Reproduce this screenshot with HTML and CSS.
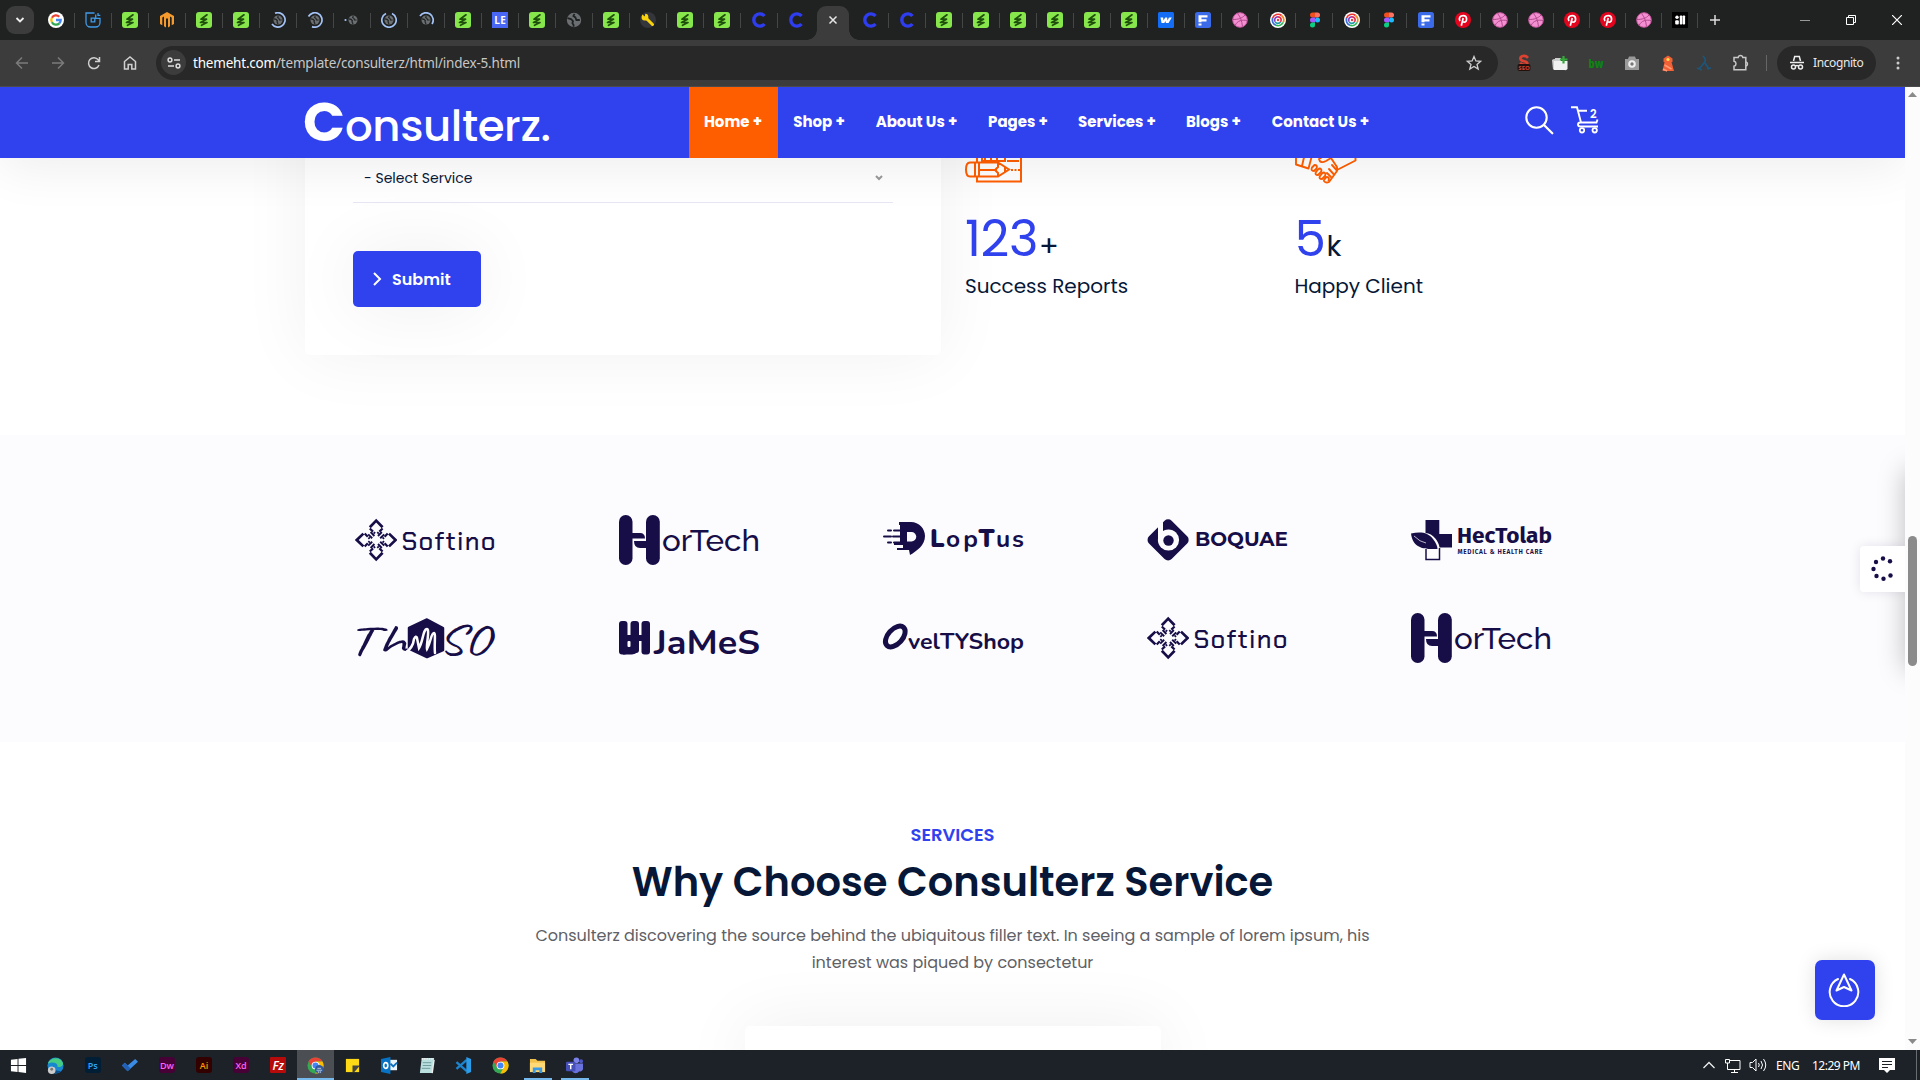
FILE: index.html
```html
<!DOCTYPE html>
<html lang="en">
<head>
<meta charset="utf-8">
<title>Consulterz</title>
<link rel="stylesheet" href="styles.css">
</head>
<body>
<svg class="defs" aria-hidden="true">
  <symbol id="google" viewBox="0 0 16 16"><circle cx="8" cy="8" r="8" fill="#fff"/><g fill="none" stroke-width="2.3"><path d="M11.3 4.8A4.7 4.7 0 0 0 3.9 5.8" stroke="#ea4335"/><path d="M3.9 5.8a4.7 4.7 0 0 0 0 4.5" stroke="#fbbc05"/><path d="M3.9 10.2a4.7 4.7 0 0 0 7.4 1.2" stroke="#34a853"/><path d="M11.3 11.4A4.7 4.7 0 0 0 12.7 8H8" stroke="#4285f4"/></g></symbol>
  <symbol id="bluebox" viewBox="0 0 16 16"><path d="M9.500 1H1v9.500A4.500 4.500 0 0 0 5.500 15h5a4.500 4.500 0 0 0 4.500-4.500V6.300h-4.300V2.500M13 1v2.300h2.300M6.200 6.200h3.600v3.600H6.200z" fill="none" stroke="#3f9ae8" stroke-width="1.300"/></symbol>
  <symbol id="green" viewBox="0 0 16 16"><rect width="16" height="16" rx="3" fill="#87e64b"/><path d="M11 2.800 5 7.200h5.500L4.500 10.500h6.500L5.500 13.300" fill="none" stroke="#1f4f0c" stroke-width="1.700" stroke-linejoin="round" stroke-linecap="round"/></symbol>
  <symbol id="magento" viewBox="0 0 16 16"><path d="M8 0 15 4v8l-2.300 1.300V5.400L11 4.400v9.800l-2 1.300V6.400h-2v9.100l-2-1.300V4.400L3.300 5.400v7.900L1 12V4z" fill="#f79a2e"/></symbol>
  <symbol id="globe" viewBox="0 0 16 16"><circle cx="8" cy="8" r="7.200" fill="#6b6f72"/><path d="M1.500 6.200 5 7l2 2.200-.6 2 1.200 1.800v1.700M8.500 1.800 7.400 4l2 1.400 1 2.600h3.400" fill="none" stroke="#202221" stroke-width="1.800"/></symbol>
  <symbol id="spin1" viewBox="0 0 16 16"><use href="#globe" x="3" y="3" width="10" height="10"/><path d="M5 1.300A7.200 7.200 0 1 1 2 12" fill="none" stroke="#a4c3f7" stroke-width="1.700"/></symbol>
  <symbol id="spin2" viewBox="0 0 16 16"><use href="#globe" x="3" y="3" width="10" height="10"/><path d="M1.500 4.500A7.200 7.200 0 1 1 5 14.600" fill="none" stroke="#a4c3f7" stroke-width="1.700"/></symbol>
  <symbol id="spin3" viewBox="0 0 16 16"><use href="#globe" x="4" y="3" width="10" height="10"/><circle cx="1.500" cy="8" r="1.100" fill="#a4c3f7"/></symbol>
  <symbol id="spin4" viewBox="0 0 16 16"><use href="#globe" x="3" y="3" width="10" height="10"/><path d="M11 1.500A7.200 7.200 0 1 1 5 1.500" fill="none" stroke="#a4c3f7" stroke-width="1.700"/></symbol>
  <symbol id="spin5" viewBox="0 0 16 16"><use href="#globe" x="3" y="3" width="10" height="10"/><path d="M2 4A7.200 7.200 0 0 1 14 12" fill="none" stroke="#a4c3f7" stroke-width="1.700"/></symbol>
  <symbol id="wrench" viewBox="0 0 16 16"><circle cx="8" cy="8" r="8" fill="#34363b"/><path d="m6.500 6.500 6 6" stroke="#fbd30c" stroke-width="3" stroke-linecap="round"/><path d="M2.200 2.500 5 4.500 5.200 1.800a3.400 3.400 0 1 1-3.600 3z" fill="#fbd30c"/></symbol>
  <symbol id="cee" viewBox="0 0 16 16"><path d="M13.500 4A6.100 6.100 0 1 0 13.500 12" fill="none" stroke="#2e3df0" stroke-width="3.400"/></symbol>
  <symbol id="webflow" viewBox="0 0 16 16"><rect width="16" height="16" rx="1.500" fill="#146ef5"/><path d="M2.500 5.500h2.600l.5 3 1.600-3h1.900l.4 3 1.500-3h2.800L10.500 11H7.900l-.4-2-1.200 2H3.600z" fill="#fff"/></symbol>
  <symbol id="eff" viewBox="0 0 16 16"><rect width="16" height="16" rx="2.500" fill="#3b6be8"/><path d="M3.500 3.300h9v2.300h-6v1.700h5v2.200h-5v.7h-3zM3.500 11.500h3v1.900h-3z" fill="#fff"/></symbol>
  <symbol id="dribbble" viewBox="0 0 16 16"><circle cx="8" cy="8" r="7.300" fill="#f48fd1" stroke="#c2559c" stroke-width="1"/><path d="M5.500 1.500c3 3.500 4.200 7 5 13M1 7.500c5 0 9-1 12-4.500M3 13.500c2.500-5 7-6 12-5" fill="none" stroke="#b34a8e"/></symbol>
  <symbol id="rings" viewBox="0 0 16 16"><circle cx="8" cy="8" r="8" fill="#fff"/><g fill="none" stroke-width="1.700"><path d="M2.600 6A5.700 5.700 0 0 1 11.500 3.500" stroke="#f0322f"/><path d="M11.500 3.500A5.700 5.700 0 0 1 13 10.700" stroke="#f08b22"/><path d="M13 10.700A5.700 5.700 0 0 1 6 13.300" stroke="#2cb552"/><path d="M6 13.300A5.700 5.700 0 0 1 2.600 6" stroke="#3a6fe0"/><path d="M5 9.500A3.200 3.200 0 0 1 8 4.800" stroke="#8d3fc4"/><path d="M8 4.800A3.200 3.200 0 0 1 10.500 10" stroke="#e0284e"/><path d="M10.500 10A3.200 3.200 0 0 1 5 9.500" stroke="#1e9aa8"/></g><circle cx="8" cy="8" r="1.200" fill="#e23e3d"/></symbol>
  <symbol id="figma" viewBox="0 0 16 16"><path d="M8 .5H5.500a2.500 2.500 0 0 0 0 5H8z" fill="#f24e1e"/><path d="M8 .5h2.500a2.500 2.500 0 0 1 0 5H8z" fill="#ff7262"/><path d="M8 5.500H5.500a2.500 2.500 0 0 0 0 5H8z" fill="#a259ff"/><circle cx="10.500" cy="8" r="2.500" fill="#1abcfe"/><path d="M8 10.500H5.500A2.500 2.500 0 1 0 8 13z" fill="#0acf83"/></symbol>
  <symbol id="pin" viewBox="0 0 16 16"><circle cx="8" cy="8" r="8" fill="#e3041e"/><path d="M6.300 13.700 8.200 6M5 9C3.300 6 5 3.600 8.300 3.600c4.300 0 4.200 6.600.8 6.600-1 0-1.700-.6-1.900-1.200" fill="none" stroke="#fff" stroke-width="1.700"/></symbol>
  <symbol id="bold" viewBox="0 0 16 16"><rect width="16" height="16" fill="#000"/><circle cx="5" cy="5.200" r="1.700" fill="#fff"/><rect x="3.200" y="8.200" width="3.600" height="4.300" rx="1" fill="#fff"/><rect x="7.800" y="3.500" width="2.500" height="9" rx=".8" fill="#fff"/><rect x="10.600" y="3.500" width="2.500" height="9" rx=".8" fill="#fff"/></symbol>
  <symbol id="chrome" viewBox="0 0 18 18"><circle cx="9" cy="9" r="8.500" fill="#34a853"/><path d="M1.600 4.800A8.500 8.500 0 0 1 16.400 4.800H9L5.400 11z" fill="#ea4335"/><path d="M16.400 4.800A8.500 8.500 0 0 1 8.700 17.500L12.600 11 9 4.800z" fill="#fbbc05"/><circle cx="9" cy="9" r="4.100" fill="#fff"/><circle cx="9" cy="9" r="3.200" fill="#4285f4"/></symbol>
  <symbol id="softino-mark" viewBox="0 0 42 50"><g fill="none" stroke="#170e48"><g id="petal"><path d="M14.800 12.200 21.200 5.600l6.400 6.600" stroke-width="2.700"/><path d="m14.800 13.500 5.200 5M27.600 13.500l-5.200 5" stroke-width="2.200" stroke-dasharray="4.500 1"/><path d="m15.600 17 3.800 4M26.800 17 23 21" stroke-width="1.900"/></g><use href="#petal" transform="rotate(90 21.200 25)"/><use href="#petal" transform="rotate(180 21.200 25)"/><use href="#petal" transform="rotate(270 21.200 25)"/></g></symbol>
  <symbol id="hortech-mark" viewBox="0 0 42 50"><g fill="#170e48"><rect x="0" y="0" width="13.500" height="50" rx="6.700"/><rect x="27" y="0" width="13.800" height="50" rx="6.800"/><path d="M12 18h9q5 0 5 5.500H12zM15 26h13v7h-7q-6 0-6-7z"/></g></symbol>
</svg>

<div class="tabstrip">
  <div class="tab-search"><svg width="10" height="6"><path d="m1.500 1 3.500 3.500L8.500 1" fill="none" stroke="#eee" stroke-width="1.800"/></svg></div>
  <div class="tabs">
    <div class="tab"><svg><use href="#google"/></svg></div>
    <div class="tab"><svg><use href="#bluebox"/></svg></div>
    <div class="tab"><svg><use href="#green"/></svg></div>
    <div class="tab"><svg><use href="#magento"/></svg></div>
    <div class="tab"><svg><use href="#green"/></svg></div>
    <div class="tab"><svg><use href="#green"/></svg></div>
    <div class="tab"><svg><use href="#spin1"/></svg></div>
    <div class="tab"><svg><use href="#spin2"/></svg></div>
    <div class="tab"><svg><use href="#spin3"/></svg></div>
    <div class="tab"><svg><use href="#spin4"/></svg></div>
    <div class="tab"><svg><use href="#spin5"/></svg></div>
    <div class="tab"><svg><use href="#green"/></svg></div>
    <div class="tab"><span class="le">LE</span></div>
    <div class="tab"><svg><use href="#green"/></svg></div>
    <div class="tab"><svg><use href="#globe"/></svg></div>
    <div class="tab"><svg><use href="#green"/></svg></div>
    <div class="tab"><svg><use href="#wrench"/></svg></div>
    <div class="tab"><svg><use href="#green"/></svg></div>
    <div class="tab"><svg><use href="#green"/></svg></div>
    <div class="tab"><svg><use href="#cee"/></svg></div>
    <div class="tab quiet"><svg><use href="#cee"/></svg></div>
    <div class="tab active"><svg viewBox="0 0 16 16"><path d="m4.500 4.500 7 7m0-7-7 7" stroke="#e6e6e6" stroke-width="1.500"/></svg></div>
    <div class="tab"><svg><use href="#cee"/></svg></div>
    <div class="tab"><svg><use href="#cee"/></svg></div>
    <div class="tab"><svg><use href="#green"/></svg></div>
    <div class="tab"><svg><use href="#green"/></svg></div>
    <div class="tab"><svg><use href="#green"/></svg></div>
    <div class="tab"><svg><use href="#green"/></svg></div>
    <div class="tab"><svg><use href="#green"/></svg></div>
    <div class="tab"><svg><use href="#green"/></svg></div>
    <div class="tab"><svg><use href="#webflow"/></svg></div>
    <div class="tab"><svg><use href="#eff"/></svg></div>
    <div class="tab"><svg><use href="#dribbble"/></svg></div>
    <div class="tab"><svg><use href="#rings"/></svg></div>
    <div class="tab"><svg><use href="#figma"/></svg></div>
    <div class="tab"><svg><use href="#rings"/></svg></div>
    <div class="tab"><svg><use href="#figma"/></svg></div>
    <div class="tab"><svg><use href="#eff"/></svg></div>
    <div class="tab"><svg><use href="#pin"/></svg></div>
    <div class="tab"><svg><use href="#dribbble"/></svg></div>
    <div class="tab narrow"><svg><use href="#dribbble"/></svg></div>
    <div class="tab narrow"><svg><use href="#pin"/></svg></div>
    <div class="tab narrow"><svg><use href="#pin"/></svg></div>
    <div class="tab narrow"><svg><use href="#dribbble"/></svg></div>
    <div class="tab narrow"><svg><use href="#bold"/></svg></div>
  </div>
  <div class="new-tab"><svg width="12" height="12"><path d="M6 1v10M1 6h10" stroke="#ddd" stroke-width="1.500"/></svg></div>
  <div class="window-controls">
    <svg viewBox="0 0 10 10"><path d="M0 5.500h10" stroke="#999"/></svg>
    <svg viewBox="0 0 10 10"><path d="M.5 2.500h7v7h-7zM2.500 2.500v-2h7v7h-2" fill="none" stroke="#fff"/></svg>
    <svg viewBox="0 0 10 10"><path d="m0 0 10 10M10 0 0 10" stroke="#fff" stroke-width="1.200"/></svg>
  </div>
</div>

<div class="toolbar">
  <div class="nav-buttons">
    <svg viewBox="0 0 16 16"><path d="M14 8H2.500M8 2.500 2.500 8 8 13.500" stroke="#7b7b7b"/></svg>
    <svg viewBox="0 0 16 16"><path d="M2 8h11.500M8 2.500 13.500 8 8 13.500" stroke="#7b7b7b"/></svg>
    <svg viewBox="0 0 16 16"><path d="M13 10a5.400 5.400 0 1 1-.8-5.200L13.500 6.300M13.500 2v4.500H9" stroke="#d0d0d0"/></svg>
    <svg viewBox="0 0 16 16"><path d="M2.500 14V6.500L8 2l5.500 4.500V14h-3.700V9.500H6.200V14z" stroke="#d0d0d0"/></svg>
  </div>
  <div class="omnibox">
    <div class="site-info"><svg width="14" height="12" viewBox="0 0 14 12"><g fill="none" stroke="#ddd" stroke-width="1.500"><circle cx="3" cy="3" r="1.900"/><path d="M7 3h6M1 9h6"/><circle cx="11" cy="9" r="1.900"/></g></svg></div>
    <div class="url"><span>themeht.com</span>/template/consulterz/html/index-5.html</div>
    <svg class="star" viewBox="0 0 16 16"><path d="m8 1.500 1.900 4.400 4.800.4-3.700 3.100 1.200 4.700L8 11.500l-4.200 2.600L5 9.400 1.300 6.300l4.800-.4z" fill="none" stroke="#cfcfcf" stroke-width="1.300"/></svg>
  </div>
  <div class="extensions">
    <svg viewBox="0 0 16 16"><path d="M12 2.800C9-.5 4 1 4.500 4 5 7 11.500 5.500 11.300 8.500 11 10.500 6 10 4 8" fill="none" stroke="#dd4231" stroke-width="2.700"/><rect x="1.500" y="9" width="13" height="7" rx="2" fill="#22100f"/><text x="2.300" y="14.800" font-family="Open Sans,sans-serif" font-weight="700" font-size="6" textLength="11.500" fill="#d8432e">SEO</text></svg>
    <svg viewBox="0 0 16 16"><path d="M0 5q1-1 3-1V3h6v11.500H1z" fill="#cfcfcf"/><path d="M2 6h13.500V14q-1 1.500-3 1H2z" fill="#f1f1f1"/><path d="M11.500 1v7.500M8 4.500h7.500" stroke="#36a93c" stroke-width="2.200"/></svg>
    <svg viewBox="0 0 16 16"><text x=".5" y="12.500" font-family="Open Sans,sans-serif" font-weight="800" font-size="12" textLength="15" lengthAdjust="spacingAndGlyphs" fill="#128012">bw</text></svg>
    <svg viewBox="0 0 16 16"><path d="M1 4h3l1-2.500h6L12 4h3v11H1z" fill="#9a9a9a"/><circle cx="8" cy="9" r="3.800" fill="#eee"/><circle cx="8" cy="9" r="1.700" fill="#777"/></svg>
    <svg viewBox="0 0 16 16"><path d="m3.500 3.500 4.500-3 4.500 3V7h-1l2.500 9H2.500l2-9h-1z" fill="#f26036"/><path d="m4.500 10 7 4M3 14l4 2" stroke="#ff9a78" stroke-width="1.500"/><circle cx="8" cy="4.500" r="1.600" fill="#ffe04d"/></svg>
    <svg viewBox="0 0 16 16"><path d="M7 1q4 4 1 7l-5 6m6-6 4 6M1 13l5 2m5-1 4-1" fill="none" stroke="#1b567d" stroke-width="1.600"/></svg>
    <svg viewBox="0 0 16 16"><path d="M2 2.500h4.200q.3-2 2.300-2t2.300 2h3v12.300H2v-3.600q2-.4 2-2.500T2 6.200z" fill="none" stroke="#c8c8c8" stroke-width="1.500"/><path d="M14 7q1.500.3 1.500 2T14 11" fill="none" stroke="#c8c8c8" stroke-width="1.500"/></svg>
  </div>
  <div class="divider"></div>
  <div class="incognito"><svg width="16" height="16" viewBox="0 0 16 16"><path d="M4.500 6 5.700 1.500h4.600L11.500 6M1 7.500h14M6.500 11q1.500-1 3 0" fill="none" stroke="#eee" stroke-width="1.500"/><circle cx="4.500" cy="12" r="2" fill="none" stroke="#eee" stroke-width="1.500"/><circle cx="11.500" cy="12" r="2" fill="none" stroke="#eee" stroke-width="1.500"/></svg><span>Incognito</span></div>
  <svg class="menu" width="4" height="16"><g fill="#ccc"><circle cx="2" cy="3" r="1.500"/><circle cx="2" cy="8" r="1.500"/><circle cx="2" cy="13" r="1.500"/></g></svg>
</div>

<div class="viewport">
  <main class="page">
    <header class="site-header">
      <svg class="brand" width="246" height="44" viewBox="0 0 246 44"><text class="brand-text" fill="#fff"><tspan x="-2" y="40" font-size="54" font-weight="700" textLength="42" lengthAdjust="spacingAndGlyphs">C</tspan><tspan x="40" y="40" font-size="43.500" font-weight="500" textLength="206">onsulterz.</tspan></text></svg>
      <nav class="menu-bar">
        <a class="current">Home +</a><a>Shop +</a><a class="w-about">About Us +</a><a class="w-pages">Pages +</a><a class="w-services">Services +</a><a class="w-blogs">Blogs +</a><a class="w-contact">Contact Us +</a>
      </nav>
      <div class="header-tools">
        <svg width="29" height="29" viewBox="0 0 29 29"><circle cx="11.500" cy="11.500" r="10.200" fill="none" stroke="#fff" stroke-width="2.100"/><path d="m19 19 8.300 8.300" stroke="#fff" stroke-width="2.300" stroke-linecap="round"/></svg>
        <svg width="31" height="29" viewBox="0 0 31 29"><path d="M1 1.300h6L11 16.500M8.500 4.800H17M27.500 13.500l-1 3H10.500q-2.500 0-2.500 2t2.500 2H28" fill="none" stroke="#fff" stroke-width="1.900"/><circle cx="12" cy="24.300" r="2.200" fill="none" stroke="#fff" stroke-width="1.800"/><circle cx="24.700" cy="24.300" r="2.200" fill="none" stroke="#fff" stroke-width="1.800"/><text x="20" y="12.300" font-family="Poppins,sans-serif" font-weight="600" font-size="11.500" fill="#fff">2</text></svg>
      </div>
    </header>

    <section class="consult">
      <div class="form-card">
        <div class="select"><span>- Select Service</span><svg width="8" height="6"><path d="m1 1 3 3 3-3" fill="none" stroke="#999" stroke-width="2"/></svg></div>
        <button class="submit"><svg width="9" height="16"><path d="m1 2 6 6-6 6" fill="none" stroke="#fff" stroke-width="2"/></svg><span>Submit</span></button>
      </div>
      <div class="stats">
        <div class="stat">
          <svg width="62" height="60" viewBox="0 0 62 60"><g fill="none" stroke="#ff5e00" stroke-width="2"><path d="M12 38V2h44v55.500H12V52M17 5v32M16 37h24V5M20 36v-9M26 36v-9M32 36v-9M42 37h12M42 32h12"/><path d="M5 38.500h28l11 7-11 7H5q-4 0-4-7t4-7zM10 39v14M14 39v14M14 46h18M33 39v4l-3 3 3 3v4M40 43v6"/><path d="M46 46h9" stroke-dasharray="2 1.500"/></g></svg>
          <div class="figure"><b>123</b><span>+</span></div><p>Success Reports</p>
        </div>
        <div class="stat client">
          <svg width="62" height="60" viewBox="0 0 62 60"><g fill="none" stroke="#ff5e00" stroke-width="1.900" stroke-linejoin="round" stroke-linecap="round"><path d="M1 25v15.500l12.500 4 4-15M7 42l3-13M60.500 25v11.500L42 46M32 30l-8 5q1 5 7 2l5-3 6 9v4L34 58q-3 1.500-5-1"/><path d="m17 43.500 2.500-2.500q3.500 0 2 3.500L19 47q-3.500 0-2-3.500zM21 48l3-3.500q3.500 0 2 3.500L23 51q-3.500 0-2-3zM25 52l3-3.500q3.500 0 2 3.500L27 55q-3.500 0-2-3zM29 56l2.500-3q3.500 0 2 3.500M37 41l4.500 5M34 45l4.500 5M32 49l4 4"/></g></svg>
          <div class="figure"><b>5</b><span>k</span></div><p>Happy Client</p>
        </div>
      </div>
    </section>

    <section class="brands">
      <svg viewBox="0 0 141 50"><use href="#softino-mark" width="42" height="50"/><text x="46.500" y="34.500" class="logo-square" font-size="25.500" textLength="94">Softino</text></svg>
      <svg viewBox="0 0 141 50"><use href="#hortech-mark" width="42" height="50"/><text x="43" y="36" class="logo-thin" font-size="30.500" textLength="98" lengthAdjust="spacingAndGlyphs">orTech</text></svg>
      <svg viewBox="0 0 141 50">
        <path d="M16 7h12c8 0 14 6.500 14 14 0 9-8 15-15 19l-1-5H14v-2h6v-3h-9v-3h6V10h-1z" fill="#170e48"/><path d="M24 17h4.500a4.500 4.500 0 0 1 0 9.500H24z" fill="#fcfcff"/>
        <path d="M5 15.500h3M11 15.500h9M1 21.500h7M10 21.500h8M5 27.500h3M11 27.500h8" stroke="#170e48" stroke-width="2" stroke-linecap="round"/>
        <text y="31.500" class="logo-round"><tspan x="47" font-weight="900" font-size="25">L</tspan><tspan x="63" font-size="24.500" font-weight="700" textLength="32">op</tspan><tspan x="95.500" font-weight="900" font-size="25">T</tspan><tspan x="113" font-size="24.500" font-weight="700" textLength="28">us</tspan></text>
      </svg>
      <svg viewBox="0 0 141 50">
        <rect x="5.100" y="8.900" width="32" height="32" rx="5" transform="rotate(45 21.100 24.900)" fill="#170e48"/>
        <circle cx="21.500" cy="25" r="10.600" fill="#fcfcff"/><path d="M11 25V11l5-5V25z" fill="#fcfcff"/><circle cx="21.500" cy="25.500" r="5.200" fill="#170e48"/>
        <text x="48" y="30.500" class="logo-wide" font-weight="700" font-size="19" textLength="93" lengthAdjust="spacingAndGlyphs">BOQUAE</text>
      </svg>
      <svg viewBox="0 0 141 50">
        <path d="M14.500 5h13.800v14H41v13.500H28.500C28 27 22 18 14.500 18z" fill="#170e48"/><path d="M0 18.500c10-2 17-1 22 5.500 3 4 4.500 7 4.500 10C18 34 2 36 0 18.500z" fill="#170e48"/><path d="M3 21q6 6 12 7" stroke="#fcfcff" stroke-width=".7" fill="none"/><path d="M15 34v10.500h13.500V33" stroke="#170e48" stroke-width="1.500" fill="none"/>
        <text x="46" y="28" class="logo-fira" font-weight="700" font-size="22" textLength="95" lengthAdjust="spacingAndGlyphs">HecTolab</text>
        <text x="46.500" y="38.800" class="logo-fira" font-weight="600" font-size="6.500" textLength="85">MEDICAL &amp; HEALTH CARE</text>
      </svg>
      <svg viewBox="0 0 141 50">
        <text x="-9" y="41" class="logo-hand" font-size="43" textLength="61" lengthAdjust="spacingAndGlyphs">Th</text>
        <path d="M72 6.500 88 15v22L72 44 54 35.500V15z" fill="#170e48" stroke="#170e48" stroke-width="2.500" stroke-linejoin="round"/>
        <path d="M50 40q8-5 9-14 2-4 3-1l2 10c4-6 4-19 8-19 3 0-1 17 0 20 4-7 4-16 7-16 2 0 0 12 1 20" fill="none" stroke="#fcfcff" stroke-width="2.500" stroke-linecap="round"/>
        <text x="83" y="41" class="logo-hand" font-size="43" textLength="52" lengthAdjust="spacingAndGlyphs">SO</text>
      </svg>
      <svg viewBox="0 0 141 50">
        <g fill="#170e48"><rect x="0" y="8" width="8.500" height="33.500" rx="3"/><rect x="11.500" y="8" width="8.500" height="32" rx="3"/><rect x="22.500" y="8" width="8.500" height="33.500" rx="3"/><path d="M5 22h20v6h-5v6q0 7-7 7.500H4z"/></g><rect x="8.500" y="28" width="3" height="6" rx="1" fill="#fcfcff"/>
        <text x="35" y="41" class="logo-round" font-weight="700" font-size="34" textLength="106" lengthAdjust="spacingAndGlyphs">JaMeS</text>
      </svg>
      <svg viewBox="0 0 141 50">
        <ellipse cx="12.300" cy="23.500" rx="12.300" ry="7.300" transform="rotate(-48 12.300 23.500)" fill="none" stroke="#170e48" stroke-width="5"/>
        <text x="25" y="36" class="logo-round" font-weight="700" font-size="22" textLength="116" lengthAdjust="spacingAndGlyphs">velTYShop</text>
      </svg>
      <svg viewBox="0 0 141 50"><use href="#softino-mark" width="42" height="50"/><text x="46.500" y="34.500" class="logo-square" font-size="25.500" textLength="94">Softino</text></svg>
      <svg viewBox="0 0 141 50"><use href="#hortech-mark" width="42" height="50"/><text x="43" y="36" class="logo-thin" font-size="30.500" textLength="98" lengthAdjust="spacingAndGlyphs">orTech</text></svg>
    </section>

    <section class="services">
      <h6>SERVICES</h6>
      <h2>Why Choose Consulterz Service</h2>
      <p>Consulterz discovering the source behind the ubiquitous filler text. In seeing a sample of lorem ipsum, his<br>interest was piqued by consectetur</p>
      <div class="service-card"></div>
    </section>

    <div class="side-panel"></div>
    <div class="side-toggle"><svg width="24" height="26" viewBox="0 0 24 26"><g fill="#170e48"><circle cx="12" cy="2.500" r="2.200"/><circle cx="5" cy="6" r="2.200"/><circle cx="2.500" cy="13" r="2.200"/><circle cx="5.500" cy="20" r="2.200"/><circle cx="12.500" cy="22.700" r="2.200"/><circle cx="19.500" cy="19.500" r="2.200"/><circle cx="19" cy="5.300" r="2.200"/></g></svg></div>
    <div class="to-top"><svg width="32" height="34" viewBox="0 0 32 34"><g fill="none" stroke="#fff" stroke-width="2" stroke-linejoin="round" stroke-linecap="round"><path d="M10 6a14.300 14.300 0 1 0 12 0"/><path d="m16 1.500 7.500 16L16 14l-7.500 3.500z"/></g></svg></div>
  </main>
  <div class="scrollbar"><svg width="9" height="6"><path d="M4.500 0 9 5H0z" fill="#8a8a8a"/></svg><div class="thumb"></div><svg width="9" height="6"><path d="M4.500 5 9 0H0z" fill="#8a8a8a"/></svg></div>
</div>

<footer class="taskbar">
  <div class="apps">
    <div class="app"><svg viewBox="0 0 18 18"><path d="M1 3l7-1v6.500H1zM9 1.900 17 1v7.500H9zM1 9.500h7V16l-7-1zM9 9.500h8V17l-8-1z" fill="#fff"/></svg></div>
    <div class="app"><svg viewBox="0 0 18 18"><circle cx="9" cy="9" r="8.500" fill="#1787cf"/><path d="M1 7C3 0 15-1 17 7c0 4-5 4-6 3 1-3-4-6-10-3z" fill="#47cd83"/><path d="M7 9q-1 6 8 6-3 3-7 2-4-2-1-8z" fill="#0b4f8e"/><circle cx="5" cy="14" r="4" fill="#ccc"/><circle cx="5" cy="13" r="1.500" fill="#777"/></svg></div>
    <div class="app"><span class="adobe ps">Ps</span></div>
    <div class="app"><svg viewBox="0 0 18 18"><path d="m1 9 3-3 3 3 8-7 3 3L7 15z" fill="#3a8be6"/><path d="m1 9 3-3 6 6-3 3z" fill="#2260b5"/></svg></div>
    <div class="app"><span class="adobe dw">Dw</span></div>
    <div class="app"><span class="adobe ai">Ai</span></div>
    <div class="app"><span class="adobe xd">Xd</span></div>
    <div class="app"><span class="adobe fz">Fz</span></div>
    <div class="app focused"><svg viewBox="0 0 18 18"><use href="#chrome"/><circle cx="13" cy="13" r="4.500" fill="#31599c"/><path d="M10 14h6M11 12h4M12 15v2m2-2v2" stroke="#bcd"/></svg></div>
    <div class="app"><svg viewBox="0 0 18 18"><path d="M2 2h14v14H2z" fill="#ffd916"/><path d="M9 9h7v1l-5 6H9z" fill="#454545"/></svg></div>
    <div class="app"><svg viewBox="0 0 18 18"><path d="M9 3h8v11H9z" fill="#e9f4fc"/><path d="m10 7 3 3 4-4" fill="none" stroke="#0d6ebd" stroke-width="2"/><path d="m0 2 10-2v18L0 16z" fill="#0873c4"/><ellipse cx="5" cy="9" rx="2.200" ry="3" fill="none" stroke="#fff" stroke-width="1.700"/></svg></div>
    <div class="app"><svg viewBox="0 0 18 18"><path d="M4 1h13l-2 16H2z" fill="#b9dfdf"/><path d="M4 2h13" stroke="#eee" stroke-width="2" stroke-dasharray="1.500 1"/><path d="M5 6h9M5 9h9M4 12h9" stroke="#6b9a9a"/><path d="m17 3-2 14" stroke="#eee" stroke-width="1.500"/></svg></div>
    <div class="app"><svg viewBox="0 0 18 18"><path d="M12.500 3 1.500 12.500M12.500 15 1.500 5.500" stroke="#1c83cc" stroke-width="2.500"/><path d="m12 0 5 2v14l-5 2z" fill="#2a9ce9"/></svg></div>
    <div class="app"><svg><use href="#chrome"/></svg></div>
    <div class="app open"><svg viewBox="0 0 18 18"><path d="M1 2h6l2 2h8v12H1z" fill="#f2c14b"/><path d="M1 6h16v10H1z" fill="#ffd976"/><path d="M4 17v-6h10v6h-3v-3H7v3z" fill="#3a9ae6"/></svg></div>
    <div class="app open"><svg viewBox="0 0 18 18"><circle cx="11" cy="3.500" r="3" fill="#7b83eb"/><circle cx="16" cy="4.500" r="2" fill="#5059c9"/><path d="M6 7h12v6q-1 3-4 2-2 3-5 2-3-1-3-4z" fill="#6a72dd"/><rect y="5" width="10" height="10" rx="1" fill="#4650b8"/><path d="M2.500 7.800h5M5 8v5" stroke="#fff" stroke-width="1.500"/></svg></div>
  </div>
  <div class="tray">
    <svg width="14" height="8"><path d="m1.500 7 5.500-5.500L12.500 7" fill="none" stroke="#eee" stroke-width="1.300"/></svg>
    <svg width="17" height="15"><path d="M6 2.500h10v9H3.500v-5M7 14.500h7M10.500 12v2M1.500 1.500h4v3.500h-4zM3.500 5v3" fill="none" stroke="#fff"/></svg>
    <svg width="18" height="14"><path d="M1 4.500h2.500L7 1v12L3.500 9.500H1zM9.500 5q1.500 2 0 4M12 3q3 4 0 8M14.500 1q4.500 6 0 12" fill="none" stroke="#fff"/></svg>
    <span class="lang">ENG</span><span class="clock">12:29 PM</span>
    <svg width="16" height="17"><path d="M0 1h16v12h-5l-3 3-3-3H0z" fill="#fff"/><path d="M3 4.500h10M3 7.500h10M3 10.500h6" stroke="#1c2228"/></svg>
    <i></i>
  </div>
</footer>
</body>
</html>
```

FILE: styles.css
```css
* { box-sizing: border-box; }
body { margin: 0; width: 1920px; height: 1080px; overflow: hidden; display: flex; flex-direction: column; background: #fff; font-family: Poppins, Inter, sans-serif; color: #061738; }
svg { display: block; flex: none; }
.defs { display: none; }
h2, h6, p { margin: 0; }

/* Browser tabs */
.tabstrip { height: 40px; flex: none; display: flex; align-items: center; background: #202221; }
.tab-search { width: 28px; height: 28px; margin: 0 3.500px 0 6px; border-radius: 9px; background: #3c3c3c; display: grid; place-items: center; }
.tabs { display: flex; height: 40px; align-items: center; }
.tab { width: 37.020px; height: 40px; display: grid; place-items: center; background: linear-gradient(#454746, #454746) right center / 1px 15px no-repeat; }
.tab.narrow { width: 36px; }
.tab.quiet { background: none; }
.tab svg { width: 16px; height: 16px; }
.le { width: 16px; height: 16px; background: #4a66f5; color: #fff; font: 700 10px/16px "Open Sans", sans-serif; letter-spacing: .3px; text-align: center; }
.tab.active { height: 34px; width: 32px; margin: 6px 2.500px 0; border-radius: 9px 9px 0 0; background: #3c3c3c; position: relative; padding-bottom: 6px; }
.tab.active::before, .tab.active::after { content: ""; position: absolute; bottom: 0; width: 10px; height: 10px; }
.tab.active::before { left: -10px; background: radial-gradient(circle at 0 0, transparent 9.500px, #3c3c3c 10px); }
.tab.active::after { right: -10px; background: radial-gradient(circle at 100% 0, transparent 9.500px, #3c3c3c 10px); }
.new-tab { width: 34px; display: grid; place-items: center; }
.window-controls { margin-left: auto; display: flex; gap: 36px; padding-right: 18px; }
.window-controls svg { width: 10px; height: 10px; }

/* Browser toolbar */
.toolbar { height: 47px; flex: none; display: flex; align-items: center; padding-bottom: 1px; background: #3c3c3c; border-bottom: 1px solid #4b4b4b; }
.nav-buttons { display: flex; gap: 20px; padding-left: 14px; width: 156px; }
.nav-buttons svg { width: 16px; height: 16px; fill: none; stroke-width: 1.500; }
.omnibox { width: 1342px; height: 34px; border-radius: 17px; background: #282828; display: flex; align-items: center; padding: 0 16px 0 5px; }
.site-info { width: 25px; height: 25px; border-radius: 50%; background: #3c3c3c; display: grid; place-items: center; }
.url { font: 13.500px "Noto Sans", sans-serif; letter-spacing: -.200px; color: #c7c7c7; margin-left: 7px; }
.url span { color: #fff; }
.star { width: 16px; height: 16px; margin-left: auto; }
.extensions { display: flex; gap: 20px; margin-left: 18px; }
.extensions svg { width: 16px; height: 16px; overflow: visible; }
.divider { width: 1px; height: 16px; background: #666; margin: 0 10px 0 18px; }
.incognito { width: 99px; height: 34px; border-radius: 17px; background: #282828; color: #e8e8e8; display: flex; align-items: center; gap: 8px; padding-left: 12px; font: 12px "Noto Sans", sans-serif; letter-spacing: -.400px; }
.menu { margin-left: 20px; }

.viewport { height: 963px; flex: none; display: flex; }
.page { width: 1905px; position: relative; overflow: hidden; }

/* Sticky site header lies over the scrolled page */
.site-header { position: absolute; z-index: 3; inset: 0 0 auto 0; height: 71px; background: #3042ee; display: flex; align-items: stretch; box-shadow: 0 10px 50px rgba(0,0,0,.07); }
.brand { margin: 14px 138px 0 305px; overflow: visible; }
.brand-text { font-family: Poppins, Inter, sans-serif; }
.menu-bar { display: flex; }
.menu-bar a { width: 83px; padding: 0 1px 2px 0; display: grid; place-items: center; color: #fff; font-size: 15px; font-weight: 700; white-space: nowrap; }
.menu-bar .current { width: 89px; background: #ff5e00; }
.menu-bar .w-about { width: 112px; }
.menu-bar .w-pages { width: 91px; }
.menu-bar .w-services { width: 107px; }
.menu-bar .w-blogs { width: 86px; }
.menu-bar .w-contact { width: 128px; }
.header-tools { display: flex; gap: 16px; margin-left: 140px; padding-top: 19px; }

.consult { height: 348px; padding-left: 305px; display: flex; gap: 24px; }
.form-card { width: 636px; height: 268px; border-radius: 5px; padding: 67px 48px 0; box-shadow: 0 0 70px rgba(0,0,50,.06); }
.select { height: 49px; border-bottom: 1px solid #e6e6f5; display: flex; justify-content: space-between; align-items: center; padding: 0 10px 0 11px; font-size: 14px; }
.submit { margin: 48px 0 0; width: 128px; height: 56px; padding: 0 0 0 20px; border: 0; border-radius: 5px; background: #3042ee; color: #fff; display: flex; align-items: center; gap: 10px; font: 600 16px Poppins, Inter, sans-serif; box-shadow: 0 0 70px rgba(0,0,50,.07); }
.stats { display: flex; padding-top: 37px; }
.stat { width: 329.500px; }
.figure { height: 50px; margin-top: 25px; display: flex; align-items: baseline; gap: 1px; line-height: 60px; }
.figure b { font-weight: 400; font-size: 50px; color: #3042ee; letter-spacing: -.400px; }
.figure span { font-size: 29px; }
.stat p { margin-top: 12px; font-size: 20px; line-height: 30px; letter-spacing: -.030px; }

.brands { height: 307px; padding: 80px 0 0 355px; background: #fcfcff; display: grid; grid-template-columns: repeat(5, 141px); grid-auto-rows: 50px; gap: 48px 123px; }
.brands svg { width: 141px; height: 50px; overflow: visible; }
.brands text { fill: #170e48; }
.logo-square { font-family: "Chakra Petch", Inter, sans-serif; font-weight: 500; }
.logo-thin { font-family: Raleway, "Open Sans", sans-serif; font-weight: 500; }
.logo-hand { font-family: Caveat, Lato, sans-serif; font-weight: 400; }
.logo-round { font-family: Nunito, Lato, sans-serif; }
.logo-wide { font-family: Montserrat, Inter, sans-serif; }
.logo-fira { font-family: "Fira Sans", "Open Sans", sans-serif; }

.services { height: 308px; padding-top: 80px; display: flex; flex-direction: column; align-items: center; text-align: center; }
.services h6 { font-size: 18px; font-weight: 600; line-height: 26px; color: #3042ee; letter-spacing: -.050px; }
.services h2 { margin-top: 8px; font-size: 40px; font-weight: 600; line-height: 52px; }
.services p { margin-top: 14px; font-size: 16px; line-height: 27px; color: #606166; white-space: nowrap; }
.service-card { width: 416px; height: 60px; flex: none; margin-top: 50px; border-radius: 5px; background: #fff; box-shadow: 0 0 70px rgba(0,0,0,.07); }

.side-panel { position: absolute; left: 1905px; top: 383px; width: 100px; height: 200px; box-shadow: 0 0 25px rgba(0,0,0,.25); }
.side-toggle { position: absolute; left: 1860px; top: 459px; width: 45px; height: 46px; padding: 10px 0 0 11px; background: #fff; border-radius: 4px 0 0 4px; box-shadow: 0 0 12px rgba(0,0,40,.1); }
.to-top { position: absolute; left: 1815px; top: 873px; width: 60px; height: 60px; border-radius: 7px; background: #3042ee; display: grid; place-items: center; padding-right: 2px; box-shadow: 0 0 20px rgba(0,0,0,.12); }
.scrollbar { width: 15px; background: #fcfcfc; display: flex; flex-direction: column; align-items: center; padding: 5px 0; }
.thumb { width: 9px; height: 130px; margin: 438px 0 auto; border-radius: 5px; background: #8b8b8b; }

/* Desktop taskbar */
.taskbar { height: 30px; flex: none; background: #1c2228; display: flex; justify-content: space-between; color: #fff; }
.apps { display: flex; }
.app { width: 37.100px; height: 30px; display: grid; place-items: center; }
.app svg { width: 17px; height: 17px; }
.app.focused { background: #4b4f54; box-shadow: inset 0 -2px #76b9ed; }
.app.open { background: linear-gradient(#76b9ed, #76b9ed) center bottom / 28px 2px no-repeat; }
.adobe { width: 16px; height: 16px; border-radius: 3px; display: grid; place-items: center; font: 600 9px "Open Sans", sans-serif; }
.ps { background: #001e36; color: #31a8ff; }
.dw { background: #470137; color: #ff61f6; }
.ai { background: #330000; color: #ff9a00; }
.xd { background: #470137; color: #ff61f6; }
.fz { background: #b70b0b; font-size: 12px; font-style: italic; border-radius: 1px; }
.tray { display: flex; align-items: center; font: 12px "Noto Sans", sans-serif; padding-right: 3px; }
.tray svg + svg { margin-left: 8px; }
.lang { margin-left: 9px; width: 24px; letter-spacing: -.400px; }
.clock { margin-left: 12px; width: 49px; letter-spacing: -.500px; white-space: nowrap; }
.tray .clock + svg { margin-left: 18px; }
.tray i { width: 1px; height: 30px; background: #696d70; margin-left: 21px; }
```
